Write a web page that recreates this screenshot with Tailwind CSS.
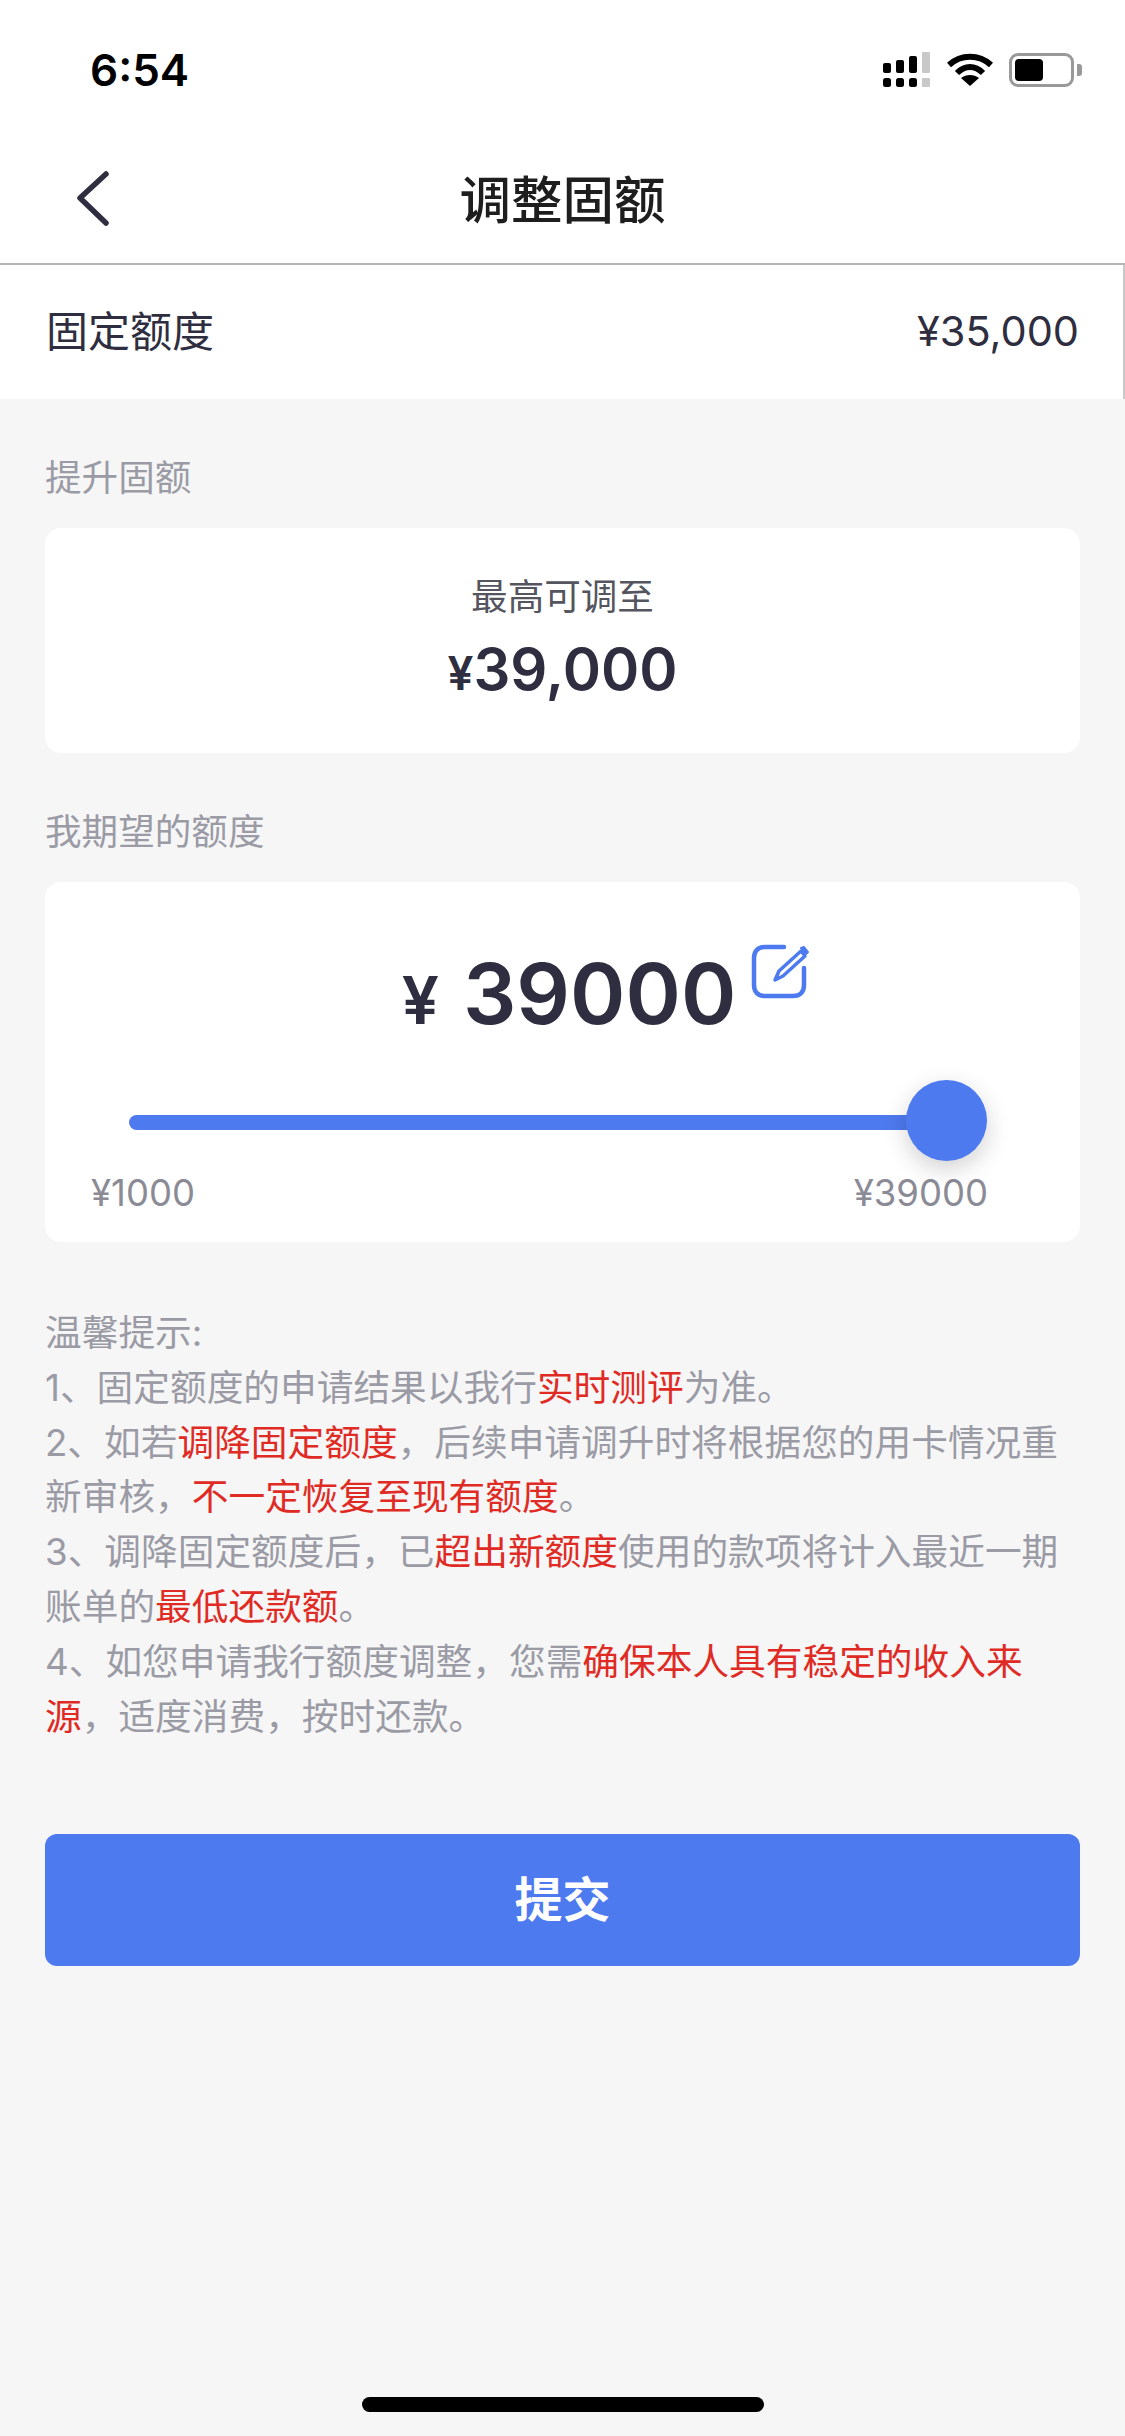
<!DOCTYPE html>
<html><head><meta charset="utf-8"><script src="https://cdn.jsdelivr.net/npm/@tailwindcss/browser@4"></script></head>
<body class="m-0">
<div class="w-[1125px] h-[2436px] bg-[#f6f6f7] flex flex-col font-['Inter','Noto_Sans_CJK_SC',sans-serif] text-[#2e2e40] relative overflow-hidden">
  <div class="h-[132px] bg-white flex items-center justify-between pl-[90px] pr-[43px] pt-[7px] shrink-0">
    <span class="text-[44px] font-semibold text-black leading-none">6:54</span>
    <div class="flex items-center gap-[16px]">
      <svg width="48" height="36" viewBox="0 0 48 36"><g fill="#000"><rect x="0" y="11" width="8" height="10" rx="2"/><rect x="13" y="8" width="8" height="13" rx="2"/><rect x="26" y="4" width="8" height="17" rx="2"/><rect x="0" y="26" width="8" height="9" rx="2.5"/><rect x="13" y="26" width="8" height="9" rx="2.5"/><rect x="26" y="26" width="8" height="9" rx="2.5"/></g><rect x="39" y="0" width="8" height="21" rx="1" fill="#c8c8c8"/><rect x="39" y="26" width="8" height="9" rx="1" fill="#c8c8c8"/></svg>
      <svg width="46" height="34" viewBox="0 0 46 34"><path d="M2 12C14 1 32 1 44 12" fill="none" stroke="#000" stroke-width="6"/><path d="M10 20C18 12 28 12 36 20" fill="none" stroke="#000" stroke-width="6"/><path d="M23 33L14 25C19 21 27 21 32 25Z" fill="#000"/></svg>
      <div class="flex items-center">
        <div class="w-[65px] h-[34px] rounded-[9px] border-[3px] border-[#999] p-[3px] bg-white"><div class="w-[28px] h-full bg-black rounded-[4px]"></div></div>
        <div class="w-[5px] h-[12px] bg-[#999] rounded-r-[3px] ml-[3px]"></div>
      </div>
    </div>
  </div>
  <div class="h-[133px] bg-white relative flex items-center justify-center border-b-[2px] border-[#b5b5b5] shrink-0">
    <svg class="absolute left-[74px] top-[36px]" width="36" height="60" viewBox="0 0 36 60"><path d="M32 6L6 30L32 55" fill="none" stroke="#2e2e40" stroke-width="5.5" stroke-linecap="round" stroke-linejoin="round" /></svg>
    <span class="text-[51.5px] font-medium text-[#1e1e1e] leading-none -mt-[2px] font-['Noto_Sans_CJK_SC',sans-serif]">调整固额</span>
  </div>
  <div class="h-[134px] bg-white flex items-center justify-between pl-[46px] pr-[44px] border-r-[2px] border-[#c8c8c8] shrink-0">
    <span class="text-[42px] leading-none">固定额度</span>
    <span class="text-[41.5px] leading-none">¥35,000</span>
  </div>
  <div class="px-[45px] flex flex-col">
    <div class="text-[36.6px] text-[#9b9ba5] leading-[36px] mt-[61px]">提升固额</div>
    <div class="mt-[32px] h-[225px] bg-white rounded-[16px] flex flex-col items-center">
      <div class="text-[36.6px] text-[#55555f] leading-[36px] mt-[51px]">最高可调至</div>
      <div class="mt-[25px] font-semibold text-[58px] leading-none"><span class="text-[46px]">¥</span>39,000</div>
    </div>
    <div class="text-[36.6px] text-[#9b9ba5] leading-[36px] mt-[61px]">我期望的额度</div>
    <div class="mt-[32px] h-[360px] bg-white rounded-[16px] relative flex flex-col">
      <div class="flex items-start justify-center h-[198px] pt-[70px] pl-[88px]">
        <span class="text-[84px] leading-none font-semibold"><span class="text-[66px] mr-[24px]">¥</span>39000</span>
        <svg class="ml-[15px] -mt-[8px]" width="60" height="56" viewBox="0 0 60 56"><path d="M33 3H14C7 3 3 7 3 14V41C3 48 7 52 14 52H42C49 52 53 48 53 41V24" fill="none" stroke="#4e7aef" stroke-width="4.5" stroke-linecap="round"/><path d="M24 36L28 27L50 7L54 12L32 32Z" fill="none" stroke="#4e7aef" stroke-width="3.5" stroke-linejoin="round"/><path d="M50 4L53 3L57 8L55 10Z" fill="#4e7aef" stroke="#4e7aef" stroke-width="2" stroke-linejoin="round"/></svg>
      </div>
      <div class="relative h-[15px] ml-[84px] w-[818px] mt-[35px] bg-[#4e7aef] rounded-l-full">
        <div class="absolute -right-[40px] -top-[35px] w-[81px] h-[81px] rounded-full bg-[#4e7aef] shadow-[0_8px_24px_rgba(0,0,0,0.18)]"></div>
      </div>
      <div class="flex justify-between pl-[46px] pr-[92px] mt-[45px] text-[36.5px] leading-none text-[#8b8b96]"><span>¥1000</span><span>¥39000</span></div>
    </div>
    <div class="mt-[64px] text-[36.7px] leading-[54.8px] text-[#9b9ba5] w-[1034px]">
      <div>温馨提示:</div>
      <div>1、固定额度的申请结果以我行<span class="text-[#e02b25]">实时测评</span>为准。</div>
      <div>2、如若<span class="text-[#e02b25]">调降固定额度</span>，后续申请调升时将根据您的用卡情况重新审核，<span class="text-[#e02b25]">不一定恢复至现有额度</span>。</div>
      <div>3、调降固定额度后，已<span class="text-[#e02b25]">超出新额度</span>使用的款项将计入最近一期账单的<span class="text-[#e02b25]">最低还款额</span>。</div>
      <div>4、如您申请我行额度调整，您需<span class="text-[#e02b25]">确保本人具有稳定的收入来源</span>，适度消费，按时还款。</div>
    </div>
    <div class="mt-[90px] h-[132px] bg-[#4e7aef] rounded-[12px] flex items-center justify-center text-white text-[48px] font-semibold">提交</div>
  </div>
  <div class="absolute left-[362px] top-[2397px] w-[402px] h-[15px] bg-black rounded-full"></div>
</div>
</body></html>
